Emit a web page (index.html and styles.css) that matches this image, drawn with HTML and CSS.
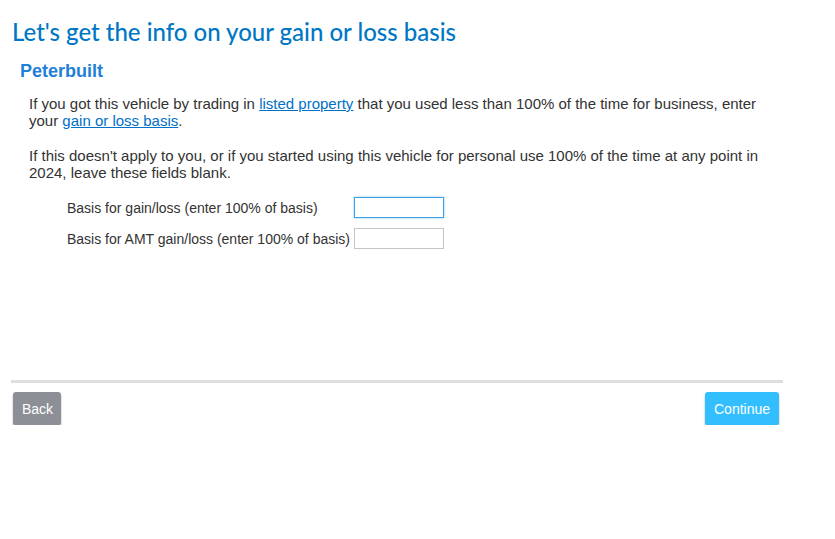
FILE: index.html
```html
<!DOCTYPE html>
<html lang="en">
<head>
    <meta charset="UTF-8">
    <meta name="viewport" content="width=device-width, initial-scale=1.0">
    <title>Gain or Loss Basis</title>
    <link rel="stylesheet" href="styles.css">
</head>
<body>
    <div class="page">
        <h1>Let's get the info on your gain or loss basis</h1>
        <h2>Peterbuilt</h2>
        <div class="content">
            <p>If you got this vehicle by trading in <a href="#">listed property</a> that you used less than 100% of the time for business, enter your <a href="#">gain or loss basis</a>.</p>
            <p>If this doesn't apply to you, or if you started using this vehicle for personal use 100% of the time at any point in 2024, leave these fields blank.</p>
            <div class="fields">
                <div class="field-row">
                    <label for="basis">Basis for gain/loss (enter 100% of basis)</label>
                    <input type="text" id="basis" class="focused">
                </div>
                <div class="field-row">
                    <label for="amt-basis">Basis for AMT gain/loss (enter 100% of basis)</label>
                    <input type="text" id="amt-basis">
                </div>
            </div>
        </div>
        <div class="footer-bar">
            <button class="btn btn-back">Back</button>
            <button class="btn btn-continue">Continue</button>
        </div>
    </div>
</body>
</html>
```

FILE: styles.css
```css
body {
    margin: 0;
    padding: 0;
    font-family: "Liberation Sans", Arial, sans-serif;
    color: #333;
    background: #fff;
}

.page {
    width: 772px;
    padding: 18px 0 0 11px;
}

h1 {
    font-family: Lato, "Open Sans", sans-serif;
    font-weight: 500;
    font-size: 24px;
    color: #0077c5;
    margin: 0 0 0 1px;
    line-height: 28px;
}

h2 {
    font-size: 18px;
    font-weight: bold;
    color: #1f7fd9;
    margin: 14px 0 0 9px;
    line-height: 22px;
}

.content {
    padding: 0 0 0 18px;
    margin-top: 13px;
    height: 285px;
}

p {
    font-size: 15px;
    line-height: 17px;
    margin: 0;
    width: 745px;
}

p + p {
    margin-top: 18px;
}

a {
    color: #0070c9;
    text-decoration: underline;
}

.fields {
    padding-left: 38px;
    margin-top: 16px;
}

.field-row {
    display: flex;
    align-items: center;
    height: 21px;
    margin-bottom: 10px;
    font-size: 14px;
}

.field-row label {
    width: 287px;
}

.field-row input {
    width: 84px;
    height: 17px;
    padding: 1px 2px;
    border: 1px solid #c5c5c5;
    margin: 0;
}

.field-row input.focused {
    border-color: #3ea3e6;
    box-shadow: 0 0 2px #7cc3f2;
}

.footer-bar {
    border-top: 3px solid #dedede;
    display: flex;
    justify-content: space-between;
    padding: 9px 4px 0 2px;
}

.btn {
    font-family: "Liberation Sans", Arial, sans-serif;
    font-size: 14px;
    color: #fff;
    border: none;
    border-radius: 3px;
    height: 33px;
    padding: 0 9px;
    box-shadow: 0 2px 2px rgba(0, 0, 0, 0.35);
    cursor: pointer;
}

.btn-back {
    background: #8d8f96;
    width: 48px;
}

.btn-continue {
    background: #33bfff;
    width: 74px;
}
```
